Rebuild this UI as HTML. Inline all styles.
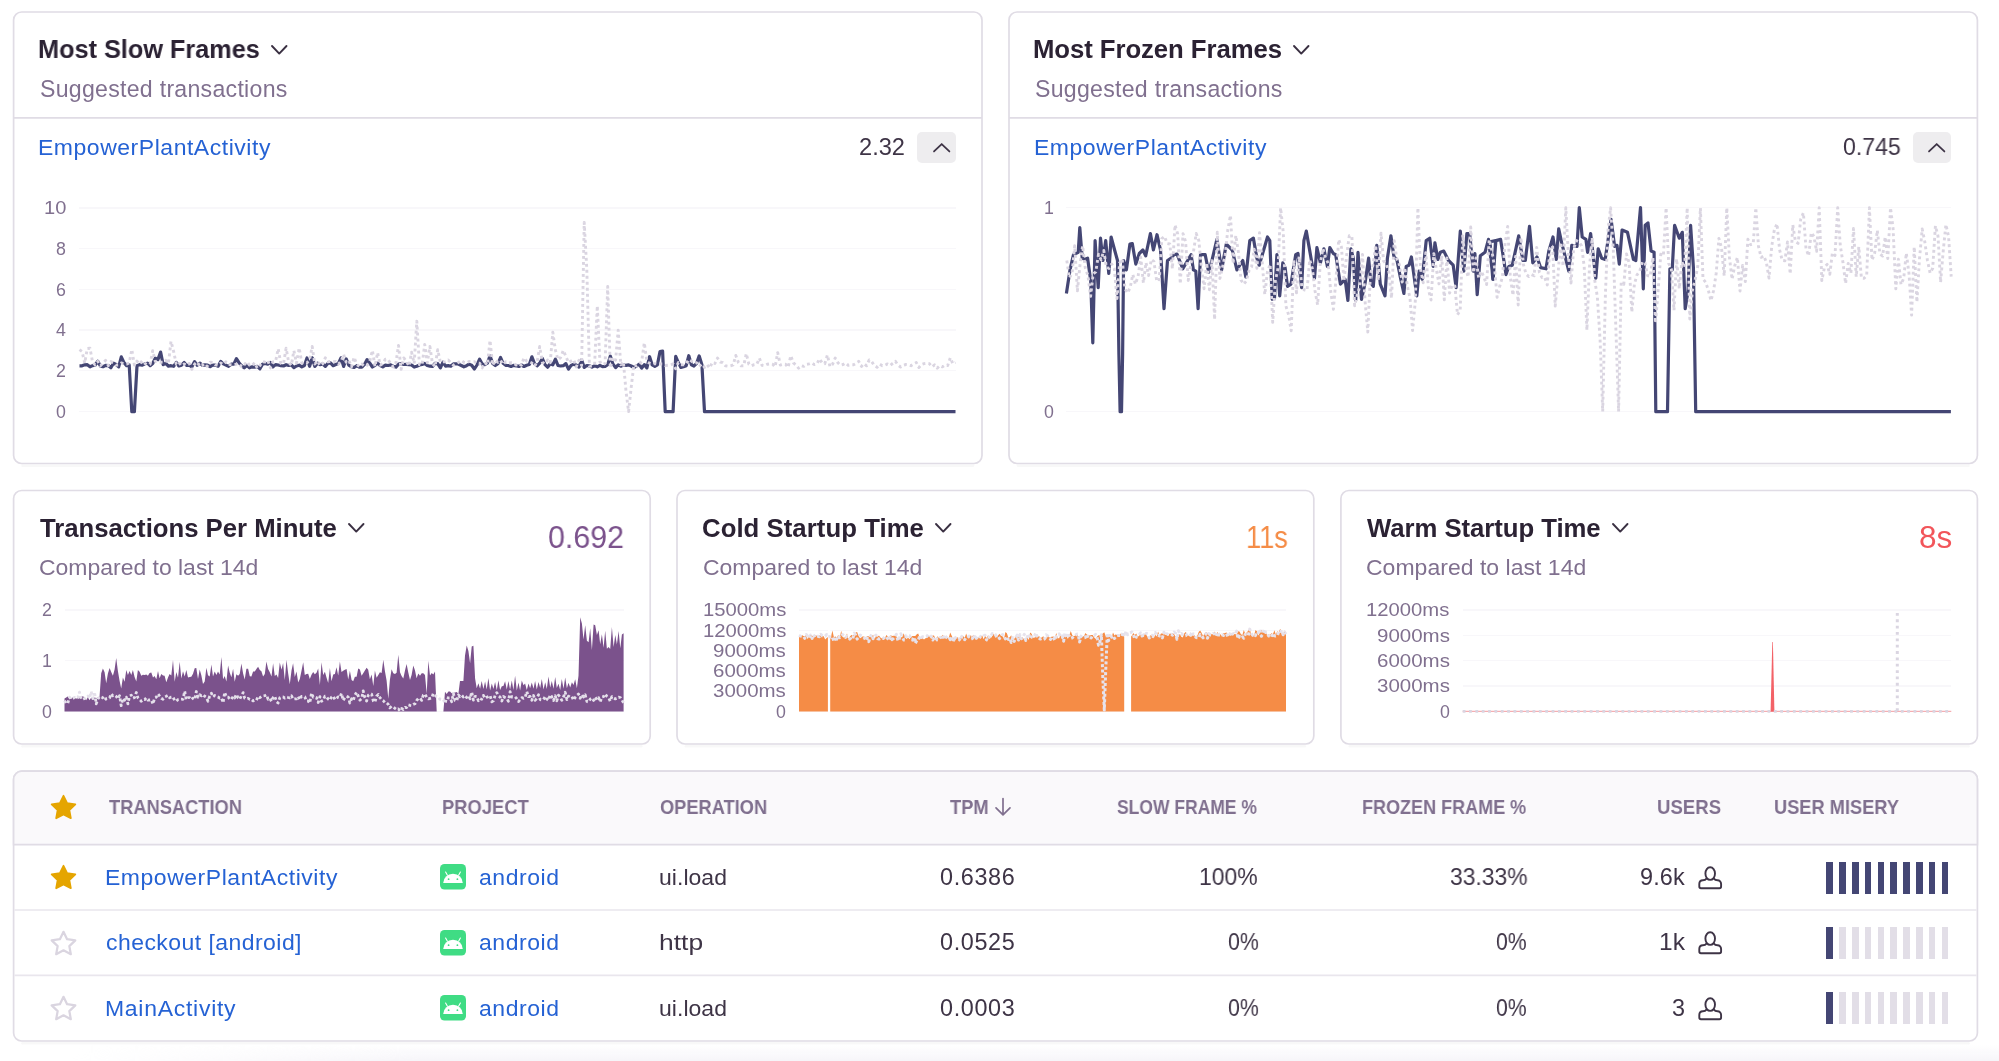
<!DOCTYPE html>
<html><head><meta charset="utf-8"><title>Performance</title>
<style>
html,body{margin:0;padding:0;background:#fff;}
body{width:1999px;height:1061px;position:relative;overflow:hidden;font-family:"Liberation Sans",sans-serif;}
.t{position:absolute;white-space:nowrap;line-height:1;will-change:transform;}
.a{position:absolute;overflow:visible;}
.g{position:absolute;height:1.3px;background:#F8F7FA;}
.btn{position:absolute;background:#EEEDEF;border-radius:5px;}
.b{position:absolute;width:6.6px;height:32px;}
.bg{position:absolute;left:0;top:1045px;width:1999px;height:16px;background:linear-gradient(to bottom,rgba(246,245,249,0),rgba(246,245,249,1));-webkit-mask-image:linear-gradient(to right,transparent 70px,#000 420px);mask-image:linear-gradient(to right,transparent 70px,#000 420px);}
</style></head><body>
<div class="bg"></div>
<svg class="a" style="left:0;top:0" width="1999" height="1061" viewBox="0 0 1999 1061">
<path d="M22.6 465.7 H973" stroke="#3E3446" stroke-opacity="0.035" stroke-width="2.6" stroke-linecap="round" fill="none"/>
<rect x="13.6" y="12" width="968.4" height="451.5" rx="8" fill="#fff" stroke="#E0DCE5" stroke-width="1.7"/>
<path d="M1018 465.7 H1968.4" stroke="#3E3446" stroke-opacity="0.035" stroke-width="2.6" stroke-linecap="round" fill="none"/>
<rect x="1009" y="12" width="968.4" height="451.5" rx="8" fill="#fff" stroke="#E0DCE5" stroke-width="1.7"/>
<path d="M22.6 746.2 H641.2" stroke="#3E3446" stroke-opacity="0.035" stroke-width="2.6" stroke-linecap="round" fill="none"/>
<rect x="13.6" y="490.5" width="636.6" height="253.5" rx="8" fill="#fff" stroke="#E0DCE5" stroke-width="1.7"/>
<path d="M686 746.2 H1304.8" stroke="#3E3446" stroke-opacity="0.035" stroke-width="2.6" stroke-linecap="round" fill="none"/>
<rect x="677" y="490.5" width="636.8" height="253.5" rx="8" fill="#fff" stroke="#E0DCE5" stroke-width="1.7"/>
<path d="M1349.9 746.2 H1968.4" stroke="#3E3446" stroke-opacity="0.035" stroke-width="2.6" stroke-linecap="round" fill="none"/>
<rect x="1340.9" y="490.5" width="636.5" height="253.5" rx="8" fill="#fff" stroke="#E0DCE5" stroke-width="1.7"/>
<path d="M22.6 1043.2 H1968.4" stroke="#3E3446" stroke-opacity="0.035" stroke-width="2.6" stroke-linecap="round" fill="none"/>
<rect x="13.6" y="771.2" width="1963.8" height="269.8" rx="8" fill="#fff" stroke="#E0DCE5" stroke-width="1.7"/>
<path d="M13.6 844.6 V779.2 A8 8 0 0 1 21.6 771.2 H1969.4 A8 8 0 0 1 1977.4 779.2 V844.6 Z" fill="#FAF9FB" stroke="#E0DCE5" stroke-width="1.7"/>
<path d="M14.4 910 H1976.6 M14.4 975.4 H1976.6" stroke="#E9E6ED" stroke-width="1.6" fill="none"/>
<path d="M13.6 117.8 H982 M1009 117.8 H1977.4" stroke="#E0DCE5" stroke-width="1.7" fill="none"/>
</svg>
<div class="t" id="t0" style="left:38px;top:35px;line-height:28px;font-size:25.73px;transform:scaleX(0.9823);transform-origin:0 0;color:#2B2233;font-weight:700;">Most Slow Frames</div>
<svg class="a" style="left:269.8px;top:43.5px" width="18.5" height="11.600000000000001" viewBox="-2 -2 18.5 11.600000000000001"><path d="M0 0 L7.25 7.600000000000001 L14.5 0" fill="none" stroke="#3A3042" stroke-width="1.9" stroke-linecap="round" stroke-linejoin="round"/></svg>
<div class="t" id="t1" style="left:40px;top:76px;line-height:26px;font-size:23.11px;letter-spacing:0.276px;color:#80708F;">Suggested transactions</div>
<div class="t" id="t2" style="left:38px;top:134px;line-height:26px;font-size:22.97px;letter-spacing:0.542px;color:#2562D4;">EmpowerPlantActivity</div>
<div class="t" id="t3" style="left:859px;top:134px;line-height:26px;font-size:23.4px;transform:scaleX(1.0098);transform-origin:0 0;color:#3E3446;">2.32</div>
<div class="btn" style="left:917.2px;top:132.3px;width:38.4px;height:30.5px"></div>
<svg class="a" style="left:931.6px;top:142px" width="19.399999999999977" height="11.5" viewBox="-2 -2 19.399999999999977 11.5"><path d="M0 7.5 L7.699999999999989 0 L15.399999999999977 7.5" fill="none" stroke="#3E3446" stroke-width="1.75" stroke-linecap="round" stroke-linejoin="round"/></svg>
<div class="t" id="t4" style="left:1033px;top:35px;line-height:28px;font-size:25.73px;letter-spacing:-0.065px;color:#2B2233;font-weight:700;">Most Frozen Frames</div>
<svg class="a" style="left:1292.0px;top:43.5px" width="18.5" height="11.600000000000001" viewBox="-2 -2 18.5 11.600000000000001"><path d="M0 0 L7.25 7.600000000000001 L14.5 0" fill="none" stroke="#3A3042" stroke-width="1.9" stroke-linecap="round" stroke-linejoin="round"/></svg>
<div class="t" id="t5" style="left:1035px;top:76px;line-height:26px;font-size:23.11px;letter-spacing:0.276px;color:#80708F;">Suggested transactions</div>
<div class="t" id="t6" style="left:1034px;top:134px;line-height:26px;font-size:22.97px;letter-spacing:0.542px;color:#2562D4;">EmpowerPlantActivity</div>
<div class="t" id="t7" style="left:1843px;top:134px;line-height:26px;font-size:23.4px;transform:scaleX(0.9872);transform-origin:0 0;color:#3E3446;">0.745</div>
<div class="btn" style="left:1912.7px;top:132.3px;width:38.4px;height:30.5px"></div>
<svg class="a" style="left:1927.1px;top:142px" width="19.40000000000009" height="11.5" viewBox="-2 -2 19.40000000000009 11.5"><path d="M0 7.5 L7.7000000000000455 0 L15.400000000000091 7.5" fill="none" stroke="#3E3446" stroke-width="1.75" stroke-linecap="round" stroke-linejoin="round"/></svg>
<div class="t" style="left:43.90px;top:198px;line-height:20px;font-size:17.8px;transform:scaleX(1.1291);transform-origin:0 0;color:#80708F">10</div>
<div class="g" style="left:79px;top:207.4px;width:876.6px"></div>
<div class="t" style="left:56.45px;top:239px;line-height:20px;font-size:17.8px;color:#80708F">8</div>
<div class="g" style="left:79px;top:248.1px;width:876.6px"></div>
<div class="t" style="left:56.45px;top:280px;line-height:20px;font-size:17.8px;color:#80708F">6</div>
<div class="g" style="left:79px;top:288.8px;width:876.6px"></div>
<div class="t" style="left:56.45px;top:320px;line-height:20px;font-size:17.8px;color:#80708F">4</div>
<div class="g" style="left:79px;top:329.4px;width:876.6px"></div>
<div class="t" style="left:56.45px;top:361px;line-height:20px;font-size:17.8px;color:#80708F">2</div>
<div class="g" style="left:79px;top:370.1px;width:876.6px"></div>
<div class="t" style="left:56.45px;top:402px;line-height:20px;font-size:17.8px;color:#80708F">0</div>
<div class="g" style="left:79px;top:410.8px;width:876.6px"></div>
<div class="t" style="left:1043.75px;top:198px;line-height:20px;font-size:17.8px;color:#80708F">1</div>
<div class="t" style="left:1043.75px;top:402px;line-height:20px;font-size:17.8px;color:#80708F">0</div>
<div class="g" style="left:1066.4px;top:207.0px;width:885.0999999999999px"></div>
<div class="g" style="left:1066.4px;top:410.8px;width:885.0999999999999px"></div>
<div class="t" id="t8" style="left:40px;top:514px;line-height:28px;font-size:25.73px;letter-spacing:-0.016px;color:#2B2233;font-weight:700;">Transactions Per Minute</div>
<svg class="a" style="left:347px;top:522.1px" width="18.5" height="11.600000000000023" viewBox="-2 -2 18.5 11.600000000000023"><path d="M0 0 L7.25 7.600000000000023 L14.5 0" fill="none" stroke="#3A3042" stroke-width="1.9" stroke-linecap="round" stroke-linejoin="round"/></svg>
<div class="t" id="t9" style="left:39px;top:554px;line-height:26px;font-size:22.97px;letter-spacing:-0.011px;color:#80708F;">Compared to last 14d</div>
<div class="t" id="t10" style="left:548px;top:519px;line-height:36px;font-size:31.54px;transform:scaleX(0.9651);transform-origin:0 0;color:#7B528C;">0.692</div>
<div class="t" id="t11" style="left:702px;top:514px;line-height:28px;font-size:25.73px;letter-spacing:0.053px;color:#2B2233;font-weight:700;">Cold Startup Time</div>
<svg class="a" style="left:933.8px;top:522.1px" width="18.5" height="11.600000000000023" viewBox="-2 -2 18.5 11.600000000000023"><path d="M0 0 L7.25 7.600000000000023 L14.5 0" fill="none" stroke="#3A3042" stroke-width="1.9" stroke-linecap="round" stroke-linejoin="round"/></svg>
<div class="t" id="t12" style="left:703px;top:554px;line-height:26px;font-size:22.97px;letter-spacing:-0.011px;color:#80708F;">Compared to last 14d</div>
<div class="t" id="t13" style="left:1246px;top:519px;line-height:36px;font-size:31.54px;transform:scaleX(0.8619);transform-origin:0 0;color:#F58C46;">11s</div>
<div class="t" id="t14" style="left:1367px;top:514px;line-height:28px;font-size:25.73px;letter-spacing:-0.047px;color:#2B2233;font-weight:700;">Warm Startup Time</div>
<svg class="a" style="left:1610.8px;top:522.1px" width="18.5" height="11.600000000000023" viewBox="-2 -2 18.5 11.600000000000023"><path d="M0 0 L7.25 7.600000000000023 L14.5 0" fill="none" stroke="#3A3042" stroke-width="1.9" stroke-linecap="round" stroke-linejoin="round"/></svg>
<div class="t" id="t15" style="left:1366px;top:554px;line-height:26px;font-size:22.97px;letter-spacing:0.032px;color:#80708F;">Compared to last 14d</div>
<div class="t" id="t16" style="left:1919px;top:519px;line-height:36px;font-size:31.54px;transform:scaleX(0.9925);transform-origin:0 0;color:#F2555A;">8s</div>
<div class="t" style="left:41.55px;top:600px;line-height:20px;font-size:17.8px;color:#80708F">2</div>
<div class="t" style="left:41.55px;top:651px;line-height:20px;font-size:17.8px;color:#80708F">1</div>
<div class="t" style="left:41.55px;top:702px;line-height:20px;font-size:17.8px;color:#80708F">0</div>
<div class="g" style="left:64.5px;top:609.4px;width:559.1px"></div>
<div class="g" style="left:64.5px;top:660.0px;width:559.1px"></div>
<div class="g" style="left:64.5px;top:710.6px;width:559.1px"></div>
<div class="t" style="left:702.50px;top:600px;line-height:20px;font-size:17.8px;transform:scaleX(1.1397);transform-origin:0 0;color:#80708F">15000ms</div>
<div class="g" style="left:799px;top:609.4px;width:487px"></div>
<div class="t" style="left:702.50px;top:621px;line-height:20px;font-size:17.8px;transform:scaleX(1.1397);transform-origin:0 0;color:#80708F">12000ms</div>
<div class="g" style="left:799px;top:629.6px;width:487px"></div>
<div class="t" style="left:712.90px;top:641px;line-height:20px;font-size:17.8px;transform:scaleX(1.1510);transform-origin:0 0;color:#80708F">9000ms</div>
<div class="g" style="left:799px;top:649.9px;width:487px"></div>
<div class="t" style="left:712.90px;top:661px;line-height:20px;font-size:17.8px;transform:scaleX(1.1510);transform-origin:0 0;color:#80708F">6000ms</div>
<div class="g" style="left:799px;top:670.1px;width:487px"></div>
<div class="t" style="left:712.90px;top:681px;line-height:20px;font-size:17.8px;transform:scaleX(1.1510);transform-origin:0 0;color:#80708F">3000ms</div>
<div class="g" style="left:799px;top:690.4px;width:487px"></div>
<div class="t" style="left:775.95px;top:702px;line-height:20px;font-size:17.8px;color:#80708F">0</div>
<div class="g" style="left:799px;top:710.6px;width:487px"></div>
<div class="t" style="left:1366.40px;top:600px;line-height:20px;font-size:17.8px;transform:scaleX(1.1384);transform-origin:0 0;color:#80708F">12000ms</div>
<div class="g" style="left:1462.7px;top:609.4px;width:488.79999999999995px"></div>
<div class="t" style="left:1376.60px;top:626px;line-height:20px;font-size:17.8px;transform:scaleX(1.1526);transform-origin:0 0;color:#80708F">9000ms</div>
<div class="g" style="left:1462.7px;top:634.7px;width:488.79999999999995px"></div>
<div class="t" style="left:1376.60px;top:651px;line-height:20px;font-size:17.8px;transform:scaleX(1.1526);transform-origin:0 0;color:#80708F">6000ms</div>
<div class="g" style="left:1462.7px;top:660.0px;width:488.79999999999995px"></div>
<div class="t" style="left:1376.60px;top:676px;line-height:20px;font-size:17.8px;transform:scaleX(1.1526);transform-origin:0 0;color:#80708F">3000ms</div>
<div class="g" style="left:1462.7px;top:685.3px;width:488.79999999999995px"></div>
<div class="t" style="left:1439.75px;top:702px;line-height:20px;font-size:17.8px;color:#80708F">0</div>
<div class="g" style="left:1462.7px;top:710.6px;width:488.79999999999995px"></div>
<div class="t" id="t17" style="left:109px;top:796px;line-height:22px;font-size:20.06px;transform:scaleX(0.9113);transform-origin:0 0;color:#80708F;font-weight:700;">TRANSACTION</div>
<div class="t" id="t18" style="left:442px;top:796px;line-height:22px;font-size:20.06px;transform:scaleX(0.9164);transform-origin:0 0;color:#80708F;font-weight:700;">PROJECT</div>
<div class="t" id="t19" style="left:660px;top:796px;line-height:22px;font-size:20.06px;transform:scaleX(0.9106);transform-origin:0 0;color:#80708F;font-weight:700;">OPERATION</div>
<div class="t" id="t20" style="left:950px;top:796px;line-height:22px;font-size:20.06px;transform:scaleX(0.9136);transform-origin:0 0;color:#80708F;font-weight:700;">TPM</div>
<div class="t" id="t21" style="left:1117px;top:796px;line-height:22px;font-size:20.06px;transform:scaleX(0.8725);transform-origin:0 0;color:#80708F;font-weight:700;">SLOW FRAME %</div>
<div class="t" id="t22" style="left:1362px;top:796px;line-height:22px;font-size:20.06px;transform:scaleX(0.8988);transform-origin:0 0;color:#80708F;font-weight:700;">FROZEN FRAME %</div>
<div class="t" id="t23" style="left:1657px;top:796px;line-height:22px;font-size:20.06px;transform:scaleX(0.9275);transform-origin:0 0;color:#80708F;font-weight:700;">USERS</div>
<div class="t" id="t24" style="left:1774px;top:796px;line-height:22px;font-size:20.06px;transform:scaleX(0.9095);transform-origin:0 0;color:#80708F;font-weight:700;">USER MISERY</div>
<svg class="a" style="left:992.6px;top:795.8px" width="20" height="22" viewBox="0 0 20 22"><path d="M10 2.5 V18.5 M3 11.8 L10 18.8 L17 11.8" fill="none" stroke="#80708F" stroke-width="1.7" stroke-linecap="round" stroke-linejoin="round"/></svg>
<svg class="a" style="left:50.3px;top:793.9px" width="27" height="27" viewBox="0 0 24 24"><path d="M12 1.6 L15.2 8.2 L22.5 9.2 L17.2 14.3 L18.5 21.5 L12 18.1 L5.5 21.5 L6.8 14.3 L1.5 9.2 L8.8 8.2 Z" fill="#E5A500" stroke="#E5A500" stroke-width="1.6" stroke-linejoin="round"/></svg>
<svg class="a" style="left:50.3px;top:864.4px" width="27" height="27" viewBox="0 0 24 24"><path d="M12 1.6 L15.2 8.2 L22.5 9.2 L17.2 14.3 L18.5 21.5 L12 18.1 L5.5 21.5 L6.8 14.3 L1.5 9.2 L8.8 8.2 Z" fill="#E5A500" stroke="#E5A500" stroke-width="1.6" stroke-linejoin="round"/></svg>
<div class="t" id="t25" style="left:105px;top:864px;line-height:26px;font-size:22.97px;letter-spacing:0.542px;color:#2562D4;">EmpowerPlantActivity</div>
<svg class="a" style="left:440px;top:864.4px" width="26" height="25.6" viewBox="0 0 26 25.6"><rect width="26" height="25.6" rx="4.5" fill="#3FDC84"/><path d="M3.2 19 A9.8 9.2 0 0 1 22.8 19 Z" fill="#fff"/><path d="M7.4 11.2 L5.6 8 M18.6 11.2 L20.4 8" stroke="#fff" stroke-width="1.1" stroke-linecap="round"/><circle cx="8.6" cy="15.2" r="0.9" fill="#3FDC84"/><circle cx="17.4" cy="15.2" r="0.9" fill="#3FDC84"/></svg>
<div class="t" id="t26" style="left:479px;top:864px;line-height:26px;font-size:22.97px;letter-spacing:0.575px;color:#2562D4;">android</div>
<div class="t" id="t27" style="left:659px;top:864px;line-height:26px;font-size:22.97px;letter-spacing:0.042px;color:#3E3446;">ui.load</div>
<div class="t" id="t28" style="left:940px;top:864px;line-height:26px;font-size:23.4px;letter-spacing:0.640px;color:#3E3446;">0.6386</div>
<div class="t" id="t29" style="left:1199px;top:864px;line-height:26px;font-size:23.4px;transform:scaleX(0.9800);transform-origin:0 0;color:#3E3446;">100%</div>
<div class="t" id="t30" style="left:1450px;top:864px;line-height:26px;font-size:23.4px;transform:scaleX(0.9781);transform-origin:0 0;color:#3E3446;">33.33%</div>
<div class="t" id="t31" style="left:1640px;top:864px;line-height:26px;font-size:23.4px;letter-spacing:0.150px;color:#3E3446;">9.6k</div>
<svg class="a" style="left:1697px;top:864.7px" width="27" height="26" viewBox="0 0 27 26"><g fill="none" stroke="#3E3446" stroke-width="1.9" stroke-linejoin="round" stroke-linecap="round"><ellipse cx="13.2" cy="8.6" rx="4.8" ry="6.3"/><path d="M9.5 13.6 C8.6 14.8 7.2 15.2 5.9 15.2 C3.7 15.2 2.3 16.9 2.3 19 V21.6 Q2.3 23.3 4 23.3 H22.4 Q24.1 23.3 24.1 21.6 V19 C24.1 16.9 22.7 15.2 20.5 15.2 C19.2 15.2 17.8 14.8 16.9 13.6"/></g></svg>
<div class="b" style="left:1826.40px;top:861.6px;background:#444674"></div>
<div class="b" style="left:1839.20px;top:861.6px;background:#444674"></div>
<div class="b" style="left:1852.00px;top:861.6px;background:#444674"></div>
<div class="b" style="left:1864.80px;top:861.6px;background:#444674"></div>
<div class="b" style="left:1877.60px;top:861.6px;background:#444674"></div>
<div class="b" style="left:1890.40px;top:861.6px;background:#444674"></div>
<div class="b" style="left:1903.20px;top:861.6px;background:#444674"></div>
<div class="b" style="left:1916.00px;top:861.6px;background:#444674"></div>
<div class="b" style="left:1928.80px;top:861.6px;background:#444674"></div>
<div class="b" style="left:1941.60px;top:861.6px;background:#444674"></div>
<svg class="a" style="left:50.3px;top:929.8000000000001px" width="27" height="27" viewBox="0 0 24 24"><path d="M12 1.6 L15.2 8.2 L22.5 9.2 L17.2 14.3 L18.5 21.5 L12 18.1 L5.5 21.5 L6.8 14.3 L1.5 9.2 L8.8 8.2 Z" fill="none" stroke="#DAD5E0" stroke-width="2" stroke-linejoin="round"/></svg>
<div class="t" id="t32" style="left:106px;top:929px;line-height:26px;font-size:22.97px;letter-spacing:0.459px;color:#2562D4;">checkout [android]</div>
<svg class="a" style="left:440px;top:929.8px" width="26" height="25.6" viewBox="0 0 26 25.6"><rect width="26" height="25.6" rx="4.5" fill="#3FDC84"/><path d="M3.2 19 A9.8 9.2 0 0 1 22.8 19 Z" fill="#fff"/><path d="M7.4 11.2 L5.6 8 M18.6 11.2 L20.4 8" stroke="#fff" stroke-width="1.1" stroke-linecap="round"/><circle cx="8.6" cy="15.2" r="0.9" fill="#3FDC84"/><circle cx="17.4" cy="15.2" r="0.9" fill="#3FDC84"/></svg>
<div class="t" id="t33" style="left:479px;top:929px;line-height:26px;font-size:22.97px;letter-spacing:0.575px;color:#2562D4;">android</div>
<div class="t" id="t34" style="left:659px;top:929px;line-height:26px;font-size:22.97px;transform:scaleX(1.1503);transform-origin:0 0;color:#3E3446;">http</div>
<div class="t" id="t35" style="left:940px;top:929px;line-height:26px;font-size:23.4px;letter-spacing:0.640px;color:#3E3446;">0.0525</div>
<div class="t" id="t36" style="left:1228px;top:929px;line-height:26px;font-size:23.4px;transform:scaleX(0.9118);transform-origin:0 0;color:#3E3446;">0%</div>
<div class="t" id="t37" style="left:1496px;top:929px;line-height:26px;font-size:23.4px;transform:scaleX(0.9059);transform-origin:0 0;color:#3E3446;">0%</div>
<div class="t" id="t38" style="left:1659px;top:929px;line-height:26px;font-size:23.4px;transform:scaleX(1.0480);transform-origin:0 0;color:#3E3446;">1k</div>
<svg class="a" style="left:1697px;top:930.1px" width="27" height="26" viewBox="0 0 27 26"><g fill="none" stroke="#3E3446" stroke-width="1.9" stroke-linejoin="round" stroke-linecap="round"><ellipse cx="13.2" cy="8.6" rx="4.8" ry="6.3"/><path d="M9.5 13.6 C8.6 14.8 7.2 15.2 5.9 15.2 C3.7 15.2 2.3 16.9 2.3 19 V21.6 Q2.3 23.3 4 23.3 H22.4 Q24.1 23.3 24.1 21.6 V19 C24.1 16.9 22.7 15.2 20.5 15.2 C19.2 15.2 17.8 14.8 16.9 13.6"/></g></svg>
<div class="b" style="left:1826.40px;top:927.0px;background:#444674"></div>
<div class="b" style="left:1839.20px;top:927.0px;background:#E2DEE7"></div>
<div class="b" style="left:1852.00px;top:927.0px;background:#E2DEE7"></div>
<div class="b" style="left:1864.80px;top:927.0px;background:#E2DEE7"></div>
<div class="b" style="left:1877.60px;top:927.0px;background:#E2DEE7"></div>
<div class="b" style="left:1890.40px;top:927.0px;background:#E2DEE7"></div>
<div class="b" style="left:1903.20px;top:927.0px;background:#E2DEE7"></div>
<div class="b" style="left:1916.00px;top:927.0px;background:#E2DEE7"></div>
<div class="b" style="left:1928.80px;top:927.0px;background:#E2DEE7"></div>
<div class="b" style="left:1941.60px;top:927.0px;background:#E2DEE7"></div>
<svg class="a" style="left:50.3px;top:995.2px" width="27" height="27" viewBox="0 0 24 24"><path d="M12 1.6 L15.2 8.2 L22.5 9.2 L17.2 14.3 L18.5 21.5 L12 18.1 L5.5 21.5 L6.8 14.3 L1.5 9.2 L8.8 8.2 Z" fill="none" stroke="#DAD5E0" stroke-width="2" stroke-linejoin="round"/></svg>
<div class="t" id="t39" style="left:105px;top:995px;line-height:26px;font-size:22.97px;letter-spacing:0.732px;color:#2562D4;">MainActivity</div>
<svg class="a" style="left:440px;top:995.2px" width="26" height="25.6" viewBox="0 0 26 25.6"><rect width="26" height="25.6" rx="4.5" fill="#3FDC84"/><path d="M3.2 19 A9.8 9.2 0 0 1 22.8 19 Z" fill="#fff"/><path d="M7.4 11.2 L5.6 8 M18.6 11.2 L20.4 8" stroke="#fff" stroke-width="1.1" stroke-linecap="round"/><circle cx="8.6" cy="15.2" r="0.9" fill="#3FDC84"/><circle cx="17.4" cy="15.2" r="0.9" fill="#3FDC84"/></svg>
<div class="t" id="t40" style="left:479px;top:995px;line-height:26px;font-size:22.97px;letter-spacing:0.575px;color:#2562D4;">android</div>
<div class="t" id="t41" style="left:659px;top:995px;line-height:26px;font-size:22.97px;letter-spacing:0.042px;color:#3E3446;">ui.load</div>
<div class="t" id="t42" style="left:940px;top:995px;line-height:26px;font-size:23.4px;letter-spacing:0.640px;color:#3E3446;">0.0003</div>
<div class="t" id="t43" style="left:1228px;top:995px;line-height:26px;font-size:23.4px;transform:scaleX(0.9118);transform-origin:0 0;color:#3E3446;">0%</div>
<div class="t" id="t44" style="left:1496px;top:995px;line-height:26px;font-size:23.4px;transform:scaleX(0.9059);transform-origin:0 0;color:#3E3446;">0%</div>
<div class="t" id="t45" style="left:1672px;top:995px;line-height:26px;font-size:23.4px;letter-spacing:0.000px;color:#3E3446;">3</div>
<svg class="a" style="left:1697px;top:995.5px" width="27" height="26" viewBox="0 0 27 26"><g fill="none" stroke="#3E3446" stroke-width="1.9" stroke-linejoin="round" stroke-linecap="round"><ellipse cx="13.2" cy="8.6" rx="4.8" ry="6.3"/><path d="M9.5 13.6 C8.6 14.8 7.2 15.2 5.9 15.2 C3.7 15.2 2.3 16.9 2.3 19 V21.6 Q2.3 23.3 4 23.3 H22.4 Q24.1 23.3 24.1 21.6 V19 C24.1 16.9 22.7 15.2 20.5 15.2 C19.2 15.2 17.8 14.8 16.9 13.6"/></g></svg>
<div class="b" style="left:1826.40px;top:992.4px;background:#444674"></div>
<div class="b" style="left:1839.20px;top:992.4px;background:#E2DEE7"></div>
<div class="b" style="left:1852.00px;top:992.4px;background:#E2DEE7"></div>
<div class="b" style="left:1864.80px;top:992.4px;background:#E2DEE7"></div>
<div class="b" style="left:1877.60px;top:992.4px;background:#E2DEE7"></div>
<div class="b" style="left:1890.40px;top:992.4px;background:#E2DEE7"></div>
<div class="b" style="left:1903.20px;top:992.4px;background:#E2DEE7"></div>
<div class="b" style="left:1916.00px;top:992.4px;background:#E2DEE7"></div>
<div class="b" style="left:1928.80px;top:992.4px;background:#E2DEE7"></div>
<div class="b" style="left:1941.60px;top:992.4px;background:#E2DEE7"></div>
<svg class="a" style="left:0;top:0" width="1999" height="1061" viewBox="0 0 1999 1061">
<path d="M79.5 365.8 L82.1 365.8 L84.7 364.8 L87.3 364.7 L90.0 366.8 L92.6 365.6 L95.2 365.0 L97.8 361.2 L100.4 366.1 L103.0 366.7 L105.6 365.4 L108.3 365.6 L110.9 367.7 L113.5 363.2 L116.1 364.5 L118.7 366.9 L121.3 356.9 L124.0 362.6 L126.6 365.6 L129.2 365.0 L131.8 411.6 L134.4 411.6 L137.0 365.7 L139.6 364.6 L142.3 365.2 L144.9 363.8 L147.5 363.2 L150.1 365.7 L152.7 363.5 L155.3 358.1 L157.9 359.6 L160.6 352.1 L163.2 364.7 L165.8 363.3 L168.4 366.1 L171.0 365.7 L173.6 366.3 L176.3 362.4 L178.9 366.0 L181.5 365.2 L184.1 362.5 L186.7 365.5 L189.3 365.1 L191.9 366.8 L194.6 361.6 L197.2 365.3 L199.8 363.1 L202.4 365.2 L205.0 364.9 L207.6 365.1 L210.2 366.7 L212.9 365.0 L215.5 365.1 L218.1 366.2 L220.7 361.4 L223.3 363.9 L225.9 365.1 L228.6 366.4 L231.2 364.2 L233.8 364.1 L236.4 358.6 L239.0 362.7 L241.6 365.7 L244.2 367.9 L246.9 365.4 L249.5 367.8 L252.1 366.8 L254.7 367.2 L257.3 366.4 L259.9 368.8 L262.5 364.2 L265.2 363.4 L267.8 364.1 L270.4 362.5 L273.0 366.8 L275.6 364.6 L278.2 365.0 L280.8 365.7 L283.5 366.0 L286.1 364.7 L288.7 365.5 L291.3 364.9 L293.9 367.6 L296.5 366.0 L299.2 365.2 L301.8 366.8 L304.4 365.5 L307.0 358.0 L309.6 366.3 L312.2 357.7 L314.8 366.4 L317.5 363.2 L320.1 364.7 L322.7 364.0 L325.3 366.4 L327.9 363.2 L330.5 362.9 L333.1 365.7 L335.8 364.5 L338.4 363.5 L341.0 357.8 L343.6 366.4 L346.2 358.9 L348.8 365.2 L351.5 366.8 L354.1 367.5 L356.7 365.7 L359.3 367.2 L361.9 367.2 L364.5 364.5 L367.1 359.6 L369.8 363.1 L372.4 367.0 L375.0 365.4 L377.6 363.1 L380.2 365.6 L382.8 366.9 L385.4 365.2 L388.1 365.5 L390.7 364.9 L393.3 366.2 L395.9 367.1 L398.5 364.1 L401.1 363.7 L403.8 364.5 L406.4 364.3 L409.0 364.7 L411.6 365.0 L414.2 367.1 L416.8 366.2 L419.4 365.0 L422.1 364.4 L424.7 363.4 L427.3 365.5 L429.9 366.2 L432.5 366.4 L435.1 363.3 L437.7 363.6 L440.4 367.9 L443.0 362.1 L445.6 366.1 L448.2 365.6 L450.8 366.2 L453.4 363.9 L456.0 363.8 L458.7 364.3 L461.3 365.5 L463.9 366.8 L466.5 365.7 L469.1 364.2 L471.7 365.2 L474.4 369.0 L477.0 365.0 L479.6 359.2 L482.2 364.1 L484.8 364.7 L487.4 363.2 L490.0 355.8 L492.7 363.5 L495.3 365.5 L497.9 363.7 L500.5 357.5 L503.1 363.3 L505.7 365.3 L508.3 365.5 L511.0 366.5 L513.6 365.4 L516.2 365.8 L518.8 366.5 L521.4 365.0 L524.0 366.5 L526.7 365.2 L529.3 364.5 L531.9 356.8 L534.5 363.6 L537.1 365.9 L539.7 363.2 L542.3 358.5 L545.0 364.7 L547.6 367.2 L550.2 363.8 L552.8 364.9 L555.4 359.1 L558.0 365.5 L560.6 366.0 L563.3 365.7 L565.9 363.6 L568.5 369.2 L571.1 365.4 L573.7 364.3 L576.3 365.1 L579.0 367.1 L581.6 360.0 L584.2 367.4 L586.8 365.5 L589.4 365.8 L592.0 367.1 L594.6 365.8 L597.3 366.8 L599.9 365.4 L602.5 366.6 L605.1 366.5 L607.7 364.7 L610.3 356.1 L612.9 363.9 L615.6 367.6 L618.2 364.8 L620.8 366.2 L623.4 365.1 L626.0 365.4 L628.6 364.9 L631.2 366.0 L633.9 367.5 L636.5 366.0 L639.1 364.2 L641.7 368.1 L644.3 364.6 L646.9 367.9 L649.6 356.7 L652.2 364.9 L654.8 366.3 L657.4 364.8 L660.0 351.6 L662.6 351.1 L665.2 411.6 L667.9 411.6 L670.5 411.6 L673.1 411.6 L675.7 356.3 L678.3 362.6 L680.9 367.5 L683.5 366.8 L686.2 365.7 L688.8 355.7 L691.4 364.7 L694.0 366.0 L696.6 363.3 L699.2 355.9 L701.9 364.6 L704.5 411.6 L707.1 411.6 L709.7 411.6 L712.3 411.6 L714.9 411.6 L717.5 411.6 L720.2 411.6 L722.8 411.6 L725.4 411.6 L728.0 411.6 L730.6 411.6 L733.2 411.6 L735.8 411.6 L738.5 411.6 L741.1 411.6 L743.7 411.6 L746.3 411.6 L748.9 411.6 L751.5 411.6 L754.2 411.6 L756.8 411.6 L759.4 411.6 L762.0 411.6 L764.6 411.6 L767.2 411.6 L769.8 411.6 L772.5 411.6 L775.1 411.6 L777.7 411.6 L780.3 411.6 L782.9 411.6 L785.5 411.6 L788.1 411.6 L790.8 411.6 L793.4 411.6 L796.0 411.6 L798.6 411.6 L801.2 411.6 L803.8 411.6 L806.4 411.6 L809.1 411.6 L811.7 411.6 L814.3 411.6 L816.9 411.6 L819.5 411.6 L822.1 411.6 L824.8 411.6 L827.4 411.6 L830.0 411.6 L832.6 411.6 L835.2 411.6 L837.8 411.6 L840.4 411.6 L843.1 411.6 L845.7 411.6 L848.3 411.6 L850.9 411.6 L853.5 411.6 L856.1 411.6 L858.7 411.6 L861.4 411.6 L864.0 411.6 L866.6 411.6 L869.2 411.6 L871.8 411.6 L874.4 411.6 L877.1 411.6 L879.7 411.6 L882.3 411.6 L884.9 411.6 L887.5 411.6 L890.1 411.6 L892.7 411.6 L895.4 411.6 L898.0 411.6 L900.6 411.6 L903.2 411.6 L905.8 411.6 L908.4 411.6 L911.0 411.6 L913.7 411.6 L916.3 411.6 L918.9 411.6 L921.5 411.6 L924.1 411.6 L926.7 411.6 L929.4 411.6 L932.0 411.6 L934.6 411.6 L937.2 411.6 L939.8 411.6 L942.4 411.6 L945.0 411.6 L947.7 411.6 L950.3 411.6 L952.9 411.6 L955.5 411.6" fill="none" stroke="#444674" stroke-width="3.2" stroke-linejoin="round" stroke-linecap="butt"/>
<path d="M79.5 349.7 L82.1 351.6 L84.7 363.1 L87.3 348.5 L90.0 348.2 L92.6 362.3 L95.2 365.0 L97.8 361.4 L100.4 365.9 L103.0 363.0 L105.6 360.4 L108.3 365.6 L110.9 361.6 L113.5 362.7 L116.1 365.1 L118.7 364.9 L121.3 363.0 L124.0 363.8 L126.6 364.1 L129.2 363.0 L131.8 349.6 L134.4 365.1 L137.0 361.1 L139.6 364.0 L142.3 360.8 L144.9 363.5 L147.5 364.7 L150.1 364.3 L152.7 350.6 L155.3 361.5 L157.9 361.7 L160.6 362.2 L163.2 362.1 L165.8 360.3 L168.4 363.5 L171.0 341.3 L173.6 351.3 L176.3 364.3 L178.9 362.5 L181.5 365.7 L184.1 364.0 L186.7 365.3 L189.3 363.5 L191.9 369.3 L194.6 364.1 L197.2 362.0 L199.8 366.3 L202.4 364.6 L205.0 367.6 L207.6 365.7 L210.2 362.1 L212.9 362.5 L215.5 364.9 L218.1 365.5 L220.7 363.0 L223.3 364.7 L225.9 361.8 L228.6 364.6 L231.2 364.8 L233.8 365.0 L236.4 364.2 L239.0 363.5 L241.6 366.7 L244.2 365.1 L246.9 361.6 L249.5 365.2 L252.1 365.5 L254.7 362.7 L257.3 368.3 L259.9 365.7 L262.5 361.8 L265.2 362.0 L267.8 360.4 L270.4 367.9 L273.0 361.9 L275.6 361.4 L278.2 348.7 L280.8 363.4 L283.5 363.7 L286.1 348.2 L288.7 362.3 L291.3 365.3 L293.9 350.7 L296.5 363.2 L299.2 347.9 L301.8 363.0 L304.4 362.3 L307.0 362.7 L309.6 359.7 L312.2 346.5 L314.8 364.1 L317.5 360.8 L320.1 365.7 L322.7 363.8 L325.3 357.8 L327.9 361.9 L330.5 361.2 L333.1 361.8 L335.8 361.4 L338.4 364.1 L341.0 361.5 L343.6 354.3 L346.2 362.3 L348.8 360.4 L351.5 366.8 L354.1 357.3 L356.7 364.2 L359.3 366.4 L361.9 364.0 L364.5 366.5 L367.1 365.3 L369.8 360.8 L372.4 350.4 L375.0 366.5 L377.6 352.6 L380.2 365.2 L382.8 363.5 L385.4 359.1 L388.1 359.6 L390.7 363.5 L393.3 367.0 L395.9 363.0 L398.5 345.5 L401.1 369.4 L403.8 357.9 L406.4 361.3 L409.0 366.2 L411.6 352.3 L414.2 363.5 L416.8 321.1 L419.4 364.6 L422.1 364.8 L424.7 344.5 L427.3 362.8 L429.9 346.5 L432.5 363.7 L435.1 366.6 L437.7 349.7 L440.4 362.4 L443.0 361.9 L445.6 361.9 L448.2 360.0 L450.8 362.7 L453.4 365.2 L456.0 363.7 L458.7 362.4 L461.3 360.4 L463.9 362.3 L466.5 362.9 L469.1 361.5 L471.7 361.7 L474.4 361.6 L477.0 363.5 L479.6 363.1 L482.2 367.9 L484.8 362.7 L487.4 365.0 L490.0 340.4 L492.7 365.3 L495.3 360.1 L497.9 362.3 L500.5 360.3 L503.1 364.5 L505.7 361.8 L508.3 363.1 L511.0 362.7 L513.6 363.0 L516.2 365.1 L518.8 363.6 L521.4 365.2 L524.0 357.8 L526.7 361.1 L529.3 361.7 L531.9 363.0 L534.5 366.2 L537.1 362.2 L539.7 346.5 L542.3 362.3 L545.0 363.9 L547.6 360.0 L550.2 362.8 L552.8 332.3 L555.4 350.1 L558.0 359.6 L560.6 357.5 L563.3 350.4 L565.9 356.4 L568.5 362.6 L571.1 361.0 L573.7 359.6 L576.3 366.9 L579.0 360.3 L581.6 365.4 L584.2 222.4 L586.8 269.2 L589.4 366.2 L592.0 366.1 L594.6 364.7 L597.3 305.8 L599.9 361.8 L602.5 364.6 L605.1 363.7 L607.7 286.5 L610.3 368.2 L612.9 357.5 L615.6 360.1 L618.2 330.2 L620.8 364.8 L623.4 361.8 L626.0 391.3 L628.6 411.6 L631.2 387.2 L633.9 364.7 L636.5 366.0 L639.1 364.2 L641.7 361.2 L644.3 342.8 L646.9 361.5 L649.6 363.2 L652.2 364.2 L654.8 363.6 L657.4 364.1 L660.0 363.9 L662.6 364.0 L665.2 365.5 L667.9 365.3 L670.5 365.0 L673.1 363.9 L675.7 368.7 L678.3 362.5 L680.9 364.7 L683.5 364.9 L686.2 363.4 L688.8 359.5 L691.4 361.1 L694.0 363.1 L696.6 362.7 L699.2 366.5 L701.9 364.0 L704.5 367.4 L707.1 364.6 L709.7 368.0 L712.3 362.3 L714.9 363.5 L717.5 358.0 L720.2 362.0 L722.8 362.6 L725.4 365.8 L728.0 366.2 L730.6 365.9 L733.2 364.9 L735.8 355.4 L738.5 362.8 L741.1 365.9 L743.7 365.8 L746.3 353.6 L748.9 364.3 L751.5 365.8 L754.2 364.7 L756.8 364.3 L759.4 358.2 L762.0 365.3 L764.6 365.7 L767.2 364.3 L769.8 363.9 L772.5 364.1 L775.1 366.8 L777.7 352.6 L780.3 365.0 L782.9 364.3 L785.5 364.2 L788.1 367.4 L790.8 355.7 L793.4 362.8 L796.0 365.0 L798.6 368.2 L801.2 365.7 L803.8 366.4 L806.4 364.3 L809.1 363.9 L811.7 362.9 L814.3 364.6 L816.9 364.2 L819.5 358.8 L822.1 362.8 L824.8 363.7 L827.4 355.0 L830.0 366.7 L832.6 364.2 L835.2 358.0 L837.8 362.6 L840.4 365.2 L843.1 364.5 L845.7 363.0 L848.3 365.3 L850.9 364.8 L853.5 364.8 L856.1 363.3 L858.7 361.4 L861.4 366.4 L864.0 363.6 L866.6 365.8 L869.2 359.9 L871.8 361.8 L874.4 365.5 L877.1 367.2 L879.7 364.1 L882.3 365.7 L884.9 365.2 L887.5 363.9 L890.1 365.5 L892.7 363.3 L895.4 361.2 L898.0 365.0 L900.6 367.0 L903.2 365.3 L905.8 364.5 L908.4 364.8 L911.0 365.7 L913.7 364.0 L916.3 362.6 L918.9 367.5 L921.5 364.5 L924.1 363.6 L926.7 363.3 L929.4 363.7 L932.0 366.9 L934.6 364.9 L937.2 368.1 L939.8 365.6 L942.4 366.9 L945.0 365.1 L947.7 365.5 L950.3 357.8 L952.9 363.8 L955.5 362.5" fill="none" stroke="#DAD5E1" stroke-width="2.9" stroke-dasharray="2.9 3.1" stroke-linejoin="round"/>
<path d="M1066.4 293.5 L1070.0 269.9 L1073.5 254.7 L1078.2 252.3 L1079.8 227.6 L1082.2 258.2 L1084.5 259.4 L1087.6 258.2 L1090.7 280.5 L1092.8 342.8 L1095.1 240.6 L1098.2 287.6 L1100.5 238.2 L1102.9 260.5 L1105.7 240.6 L1108.8 273.5 L1111.1 237.0 L1114.6 250.0 L1117.5 260.5 L1118.9 354.6 L1120.1 411.7 L1121.5 411.7 L1122.6 354.6 L1123.6 260.5 L1126.4 269.9 L1129.9 244.1 L1132.3 243.6 L1135.8 264.1 L1139.3 253.5 L1142.9 250.0 L1145.7 255.8 L1150.4 233.5 L1153.4 250.0 L1157.0 234.7 L1160.5 250.0 L1164.0 308.7 L1167.5 260.5 L1171.1 258.2 L1173.9 254.7 L1177.0 254.0 L1182.8 268.8 L1191.1 254.7 L1193.4 269.9 L1195.8 271.1 L1198.1 308.7 L1200.5 254.7 L1205.2 254.7 L1208.7 272.3 L1212.2 259.4 L1216.9 239.4 L1221.6 269.9 L1226.3 244.1 L1232.2 250.0 L1236.9 269.9 L1242.8 260.5 L1245.8 277.0 L1249.8 240.6 L1253.4 238.2 L1256.9 258.2 L1259.2 265.2 L1267.5 237.0 L1269.8 240.6 L1272.2 299.3 L1274.5 298.2 L1276.9 254.7 L1279.7 295.8 L1282.8 262.9 L1285.1 267.6 L1287.5 286.4 L1291.0 284.1 L1295.7 254.7 L1298.0 253.5 L1301.6 287.6 L1303.9 240.6 L1306.3 231.1 L1309.8 251.1 L1314.5 278.2 L1316.9 247.6 L1320.4 262.9 L1323.9 248.8 L1327.4 266.4 L1329.8 247.6 L1333.3 253.5 L1335.7 254.7 L1340.4 284.1 L1345.1 279.3 L1347.9 300.5 L1350.9 248.8 L1353.3 258.2 L1355.7 300.5 L1358.0 252.3 L1361.5 299.3 L1365.1 282.9 L1368.6 258.2 L1370.9 282.9 L1373.3 286.4 L1376.8 245.3 L1380.3 284.1 L1385.0 295.8 L1387.4 258.2 L1390.9 235.8 L1394.0 257.0 L1396.8 259.4 L1400.3 277.0 L1403.9 293.5 L1406.2 266.4 L1409.0 265.2 L1411.4 257.0 L1416.8 295.8 L1419.1 271.1 L1422.2 279.3 L1426.2 240.6 L1429.7 238.2 L1433.2 266.4 L1434.9 242.9 L1437.9 259.4 L1440.3 252.3 L1443.8 251.1 L1448.5 260.5 L1453.2 265.2 L1456.1 287.6 L1460.3 231.1 L1463.8 271.1 L1466.9 233.5 L1469.7 233.5 L1473.2 271.1 L1474.9 253.5 L1477.2 294.6 L1480.3 255.8 L1485.0 252.3 L1488.5 239.4 L1493.2 279.3 L1495.6 240.6 L1490.0 241.7 L1492.8 279.3 L1495.9 240.6 L1500.6 239.4 L1506.0 274.6 L1508.8 266.4 L1512.3 265.2 L1518.7 235.8 L1522.9 260.5 L1525.3 260.5 L1529.5 226.4 L1532.8 262.9 L1537.0 257.0 L1540.6 267.6 L1546.0 268.8 L1548.8 251.1 L1553.0 237.0 L1556.3 259.4 L1558.7 228.8 L1561.7 242.9 L1568.8 271.1 L1571.8 245.3 L1577.0 246.4 L1579.3 207.6 L1582.2 237.0 L1585.9 239.4 L1587.6 252.3 L1590.6 233.5 L1595.8 278.2 L1598.2 248.8 L1601.7 258.2 L1605.2 259.4 L1611.1 219.4 L1614.6 246.4 L1617.0 245.3 L1619.3 264.1 L1622.1 230.0 L1627.5 232.3 L1633.4 259.4 L1635.8 260.5 L1640.5 207.6 L1643.3 288.8 L1645.2 225.3 L1648.0 222.9 L1651.1 251.1 L1654.1 252.3 L1655.8 411.7 L1667.5 411.7 L1669.9 268.8 L1672.2 269.9 L1674.6 225.3 L1679.3 238.2 L1682.3 232.3 L1685.2 308.7 L1688.0 291.1 L1690.6 225.3 L1693.4 267.6 L1695.7 411.7 L1950.9 411.7" fill="none" stroke="#444674" stroke-width="3.2" stroke-linejoin="round" stroke-linecap="butt"/>
<path d="M1066.8 260.5 L1069.4 277.9 L1072.1 273.1 L1074.7 245.6 L1077.4 290.9 L1080.0 264.9 L1082.6 245.7 L1085.3 268.1 L1087.9 275.2 L1090.6 296.3 L1093.2 273.9 L1095.8 271.8 L1098.5 254.3 L1101.1 259.8 L1103.8 250.5 L1106.4 267.2 L1109.0 268.4 L1111.7 264.0 L1114.3 268.5 L1117.0 298.5 L1119.6 263.0 L1122.2 258.8 L1124.9 288.5 L1127.5 293.0 L1130.2 287.5 L1132.8 274.5 L1135.4 284.1 L1138.1 276.3 L1140.7 257.1 L1143.4 282.9 L1146.0 262.6 L1148.6 275.5 L1151.3 259.5 L1153.9 261.4 L1156.6 280.1 L1159.2 281.2 L1161.8 238.7 L1164.5 236.3 L1167.1 243.5 L1169.8 244.0 L1172.4 268.8 L1175.0 225.0 L1177.7 234.0 L1180.3 283.9 L1183.0 233.6 L1185.6 241.5 L1188.2 280.5 L1190.9 264.0 L1193.5 251.6 L1196.2 233.4 L1198.8 240.5 L1201.4 267.0 L1204.1 288.7 L1206.7 263.0 L1209.4 289.7 L1212.0 260.6 L1214.6 319.6 L1217.3 232.3 L1219.9 278.5 L1222.6 266.8 L1225.2 254.5 L1227.8 229.7 L1230.5 215.4 L1233.1 263.5 L1235.8 235.4 L1238.4 252.1 L1241.0 279.9 L1243.7 284.2 L1246.3 281.0 L1249.0 270.7 L1251.6 266.8 L1254.2 249.1 L1256.9 268.2 L1259.5 232.8 L1262.2 262.1 L1264.8 294.6 L1267.4 272.0 L1270.1 264.3 L1272.7 322.4 L1275.4 280.7 L1278.0 268.4 L1280.6 207.8 L1283.3 232.7 L1285.9 306.0 L1288.6 314.9 L1291.2 330.7 L1293.8 260.1 L1296.5 292.8 L1299.1 256.4 L1301.8 287.3 L1304.4 290.0 L1307.0 290.5 L1309.7 259.9 L1312.3 268.2 L1315.0 290.7 L1317.6 304.9 L1320.2 264.1 L1322.9 248.7 L1325.5 257.2 L1328.2 263.5 L1330.8 292.2 L1333.4 309.2 L1336.1 277.6 L1338.7 239.5 L1341.4 247.0 L1344.0 280.8 L1346.6 255.6 L1349.3 235.6 L1351.9 236.4 L1354.6 305.8 L1357.2 295.1 L1359.8 286.5 L1362.5 254.4 L1365.1 301.8 L1367.8 332.0 L1370.4 274.4 L1373.0 265.1 L1375.7 245.2 L1378.3 280.4 L1381.0 233.1 L1383.6 261.0 L1386.2 264.0 L1388.9 272.1 L1391.5 298.1 L1394.2 240.7 L1396.8 259.0 L1399.4 264.6 L1402.1 282.1 L1404.7 267.5 L1407.4 286.2 L1410.0 298.0 L1412.6 330.6 L1415.3 301.1 L1417.9 207.8 L1420.6 269.5 L1423.2 282.8 L1425.8 252.7 L1428.5 289.8 L1431.1 300.0 L1433.8 253.6 L1436.4 269.7 L1439.0 283.9 L1441.7 255.5 L1444.3 299.8 L1447.0 257.9 L1449.6 293.1 L1452.2 284.8 L1454.9 286.0 L1457.5 314.8 L1460.2 310.4 L1462.8 234.5 L1465.4 266.2 L1468.1 277.2 L1470.7 227.0 L1473.4 272.7 L1476.0 258.0 L1478.6 277.6 L1481.3 271.1 L1483.9 277.2 L1486.6 284.6 L1489.2 239.6 L1491.8 250.3 L1494.5 267.1 L1497.1 297.3 L1499.8 286.2 L1502.4 277.1 L1505.0 244.4 L1507.7 226.5 L1510.3 277.1 L1513.0 295.3 L1515.6 256.5 L1518.2 305.0 L1520.9 237.5 L1523.5 264.9 L1526.2 274.4 L1528.8 276.5 L1531.4 274.5 L1534.1 275.8 L1536.7 247.4 L1539.4 272.5 L1542.0 277.7 L1544.6 277.2 L1547.3 285.0 L1549.9 248.6 L1552.6 245.7 L1555.2 306.1 L1557.8 277.2 L1560.5 242.4 L1563.1 266.3 L1565.8 207.8 L1568.4 255.0 L1571.0 283.0 L1573.7 248.6 L1576.3 240.6 L1579.0 241.8 L1581.6 245.9 L1584.2 266.6 L1586.9 330.1 L1589.5 266.3 L1592.2 237.8 L1594.8 280.6 L1597.4 297.3 L1600.1 340.3 L1602.7 411.6 L1605.4 294.3 L1608.0 230.0 L1610.6 207.8 L1613.3 249.6 L1615.9 330.1 L1618.6 411.6 L1621.2 282.5 L1623.8 284.3 L1626.5 254.0 L1629.1 262.8 L1631.8 312.1 L1634.4 284.1 L1637.0 274.8 L1639.7 271.3 L1642.3 261.7 L1645.0 262.9 L1647.6 275.7 L1650.2 276.3 L1652.9 257.3 L1655.5 323.0 L1658.2 289.6 L1660.8 254.2 L1663.4 255.5 L1666.1 207.8 L1668.7 263.3 L1671.4 269.4 L1674.0 310.3 L1676.6 258.9 L1679.3 288.7 L1681.9 262.2 L1684.6 267.2 L1687.2 207.8 L1689.8 319.0 L1692.5 289.8 L1695.1 280.1 L1697.8 266.0 L1700.4 208.1 L1703.0 278.9 L1705.7 282.2 L1708.3 290.2 L1711.0 300.6 L1713.6 290.5 L1716.2 273.2 L1718.9 238.4 L1721.5 247.7 L1724.2 275.9 L1726.8 207.8 L1729.4 257.2 L1732.1 279.3 L1734.7 265.9 L1737.4 257.4 L1740.0 291.0 L1742.6 265.5 L1745.3 281.6 L1747.9 239.3 L1750.6 244.7 L1753.2 243.8 L1755.8 207.8 L1758.5 246.4 L1761.1 257.4 L1763.8 255.8 L1766.4 262.6 L1769.0 278.1 L1771.7 246.5 L1774.3 230.1 L1777.0 223.7 L1779.6 249.7 L1782.2 260.4 L1784.9 260.7 L1787.5 242.0 L1790.2 274.0 L1792.8 224.9 L1795.4 241.4 L1798.1 243.4 L1800.7 219.3 L1803.4 212.8 L1806.0 248.6 L1808.6 255.9 L1811.3 232.6 L1813.9 236.4 L1816.6 251.3 L1819.2 207.8 L1821.8 280.6 L1824.5 267.2 L1827.1 264.4 L1829.8 274.3 L1832.4 252.8 L1835.0 255.4 L1837.7 207.8 L1840.3 245.5 L1843.0 262.8 L1845.6 283.5 L1848.2 263.4 L1850.9 273.1 L1853.5 228.4 L1856.2 276.8 L1858.8 246.8 L1861.4 278.1 L1864.1 278.3 L1866.7 275.6 L1869.4 207.8 L1872.0 260.1 L1874.6 253.6 L1877.3 230.3 L1879.9 253.9 L1882.6 256.0 L1885.2 237.0 L1887.8 258.5 L1890.5 207.8 L1893.1 228.7 L1895.8 288.9 L1898.4 259.1 L1901.0 284.5 L1903.7 278.3 L1906.3 253.1 L1909.0 273.5 L1911.6 315.1 L1914.2 246.9 L1916.9 302.1 L1919.5 258.7 L1922.2 229.0 L1924.8 241.8 L1927.4 260.2 L1930.1 273.0 L1932.7 268.3 L1935.4 225.9 L1938.0 236.0 L1940.6 282.4 L1943.3 250.1 L1945.9 224.5 L1948.6 236.6 L1951.2 276.7" fill="none" stroke="#DAD5E1" stroke-width="2.9" stroke-dasharray="2.9 3.1" stroke-linejoin="round"/>
<path d="M64.5 698.6 L66.2 697.6 L67.8 696.5 L69.5 698.4 L71.2 699.0 L72.8 697.0 L74.5 697.7 L76.2 698.8 L77.9 697.6 L79.5 697.1 L81.2 696.3 L82.9 696.5 L84.5 697.0 L86.2 700.3 L87.9 696.6 L89.5 700.3 L91.2 697.5 L92.9 699.2 L94.5 697.6 L96.2 698.1 L97.9 697.6 L99.5 697.0 L101.2 673.2 L102.9 668.6 L104.6 672.3 L106.2 683.2 L107.9 673.6 L109.6 667.9 L111.2 672.0 L112.9 675.8 L114.6 669.4 L116.2 658.0 L117.9 671.1 L119.6 681.0 L121.2 688.5 L122.9 677.5 L124.6 681.8 L126.3 669.9 L127.9 675.0 L129.6 671.0 L131.3 675.0 L132.9 670.1 L134.6 676.9 L136.3 681.5 L137.9 670.0 L139.6 671.7 L141.3 675.7 L142.9 674.8 L144.6 675.0 L146.3 674.4 L147.9 675.8 L149.6 673.0 L151.3 672.4 L153.0 677.6 L154.6 676.1 L156.3 679.3 L158.0 671.0 L159.6 678.3 L161.3 674.1 L163.0 675.4 L164.6 675.8 L166.3 682.3 L168.0 677.5 L169.6 673.9 L171.3 675.4 L173.0 660.0 L174.7 681.8 L176.3 672.0 L178.0 677.7 L179.7 661.8 L181.3 678.4 L183.0 671.3 L184.7 676.4 L186.3 669.9 L188.0 677.6 L189.7 676.9 L191.3 676.7 L193.0 673.7 L194.7 668.3 L196.3 668.0 L198.0 679.0 L199.7 669.5 L201.4 675.5 L203.0 684.1 L204.7 681.5 L206.4 667.8 L208.0 675.3 L209.7 676.6 L211.4 664.5 L213.0 676.6 L214.7 671.4 L216.4 674.9 L218.0 671.6 L219.7 674.4 L221.4 657.0 L223.1 679.3 L224.7 676.0 L226.4 681.4 L228.1 665.5 L229.7 672.6 L231.4 677.3 L233.1 668.8 L234.7 681.7 L236.4 674.3 L238.1 675.8 L239.7 674.1 L241.4 663.4 L243.1 673.4 L244.7 679.5 L246.4 668.8 L248.1 668.8 L249.8 676.3 L251.4 676.4 L253.1 671.5 L254.8 671.4 L256.4 668.9 L258.1 666.8 L259.8 670.0 L261.4 671.3 L263.1 676.4 L264.8 674.0 L266.4 661.5 L268.1 669.0 L269.8 672.3 L271.5 676.6 L273.1 663.3 L274.8 676.0 L276.5 674.6 L278.1 677.9 L279.8 662.6 L281.5 669.7 L283.1 663.0 L284.8 679.9 L286.5 659.8 L288.1 673.0 L289.8 684.2 L291.5 670.5 L293.1 663.3 L294.8 677.1 L296.5 671.4 L298.2 682.6 L299.8 679.0 L301.5 670.7 L303.2 662.3 L304.8 675.1 L306.5 673.9 L308.2 673.7 L309.8 678.9 L311.5 674.7 L313.2 672.0 L314.8 674.2 L316.5 672.8 L318.2 668.5 L319.9 685.0 L321.5 662.2 L323.2 674.9 L324.9 671.7 L326.5 677.5 L328.2 683.1 L329.9 668.0 L331.5 681.2 L333.2 674.4 L334.9 673.9 L336.5 667.2 L338.2 675.6 L339.9 661.4 L341.5 672.0 L343.2 670.7 L344.9 669.7 L346.6 668.9 L348.2 679.4 L349.9 670.7 L351.6 680.1 L353.2 681.3 L354.9 676.8 L356.6 676.8 L358.2 668.6 L359.9 669.6 L361.6 675.8 L363.2 673.3 L364.9 670.4 L366.6 667.7 L368.2 669.8 L369.9 679.2 L371.6 674.5 L373.3 685.9 L374.9 670.4 L376.6 677.8 L378.3 674.9 L379.9 672.2 L381.6 673.0 L383.3 659.8 L384.9 671.0 L386.6 680.4 L388.3 698.8 L389.9 679.7 L391.6 669.2 L393.3 673.2 L395.0 674.0 L396.6 672.7 L398.3 654.8 L400.0 672.3 L401.6 676.1 L403.3 678.5 L405.0 670.4 L406.6 664.0 L408.3 672.5 L410.0 680.1 L411.6 675.1 L413.3 665.4 L415.0 670.6 L416.6 678.2 L418.3 673.5 L420.0 675.7 L421.7 673.2 L423.3 673.2 L425.0 675.1 L426.7 693.7 L428.3 660.8 L430.0 675.5 L431.7 673.1 L433.3 674.6 L435.0 671.5 L436.7 711.4 L438.3 711.4 L440.0 711.4 L441.7 711.4 L443.4 711.4 L445.0 691.8 L446.7 694.0 L448.4 691.4 L450.0 691.4 L451.7 693.2 L453.4 692.5 L455.0 692.6 L456.7 692.1 L458.4 693.8 L460.0 681.0 L461.7 681.0 L463.4 681.0 L465.0 655.6 L466.7 645.6 L468.4 650.9 L470.1 663.3 L471.7 646.6 L473.4 645.8 L475.1 678.6 L476.7 688.2 L478.4 683.2 L480.1 688.8 L481.7 681.0 L483.4 688.9 L485.1 681.4 L486.7 689.6 L488.4 678.0 L490.1 690.5 L491.8 683.6 L493.4 689.0 L495.1 681.9 L496.8 690.2 L498.4 680.2 L500.1 690.1 L501.8 686.3 L503.4 686.1 L505.1 681.2 L506.8 689.6 L508.4 681.0 L510.1 689.6 L511.8 680.4 L513.4 689.9 L515.1 675.8 L516.8 690.5 L518.5 682.6 L520.1 690.6 L521.8 680.4 L523.5 685.2 L525.1 683.4 L526.8 690.1 L528.5 683.4 L530.1 688.3 L531.8 682.5 L533.5 688.8 L535.1 680.9 L536.8 689.4 L538.5 681.9 L540.2 688.0 L541.8 678.9 L543.5 689.6 L545.2 682.2 L546.8 689.1 L548.5 676.4 L550.2 687.4 L551.8 680.9 L553.5 688.8 L555.2 677.1 L556.8 688.0 L558.5 683.8 L560.2 689.9 L561.8 679.0 L563.5 688.7 L565.2 677.6 L566.9 688.3 L568.5 682.7 L570.2 687.4 L571.9 682.2 L573.5 685.1 L575.2 679.2 L576.9 688.3 L578.5 675.8 L580.2 617.3 L581.9 623.6 L583.5 639.4 L585.2 625.2 L586.9 640.7 L588.6 642.3 L590.2 628.3 L591.9 650.1 L593.6 624.6 L595.2 625.2 L596.9 635.1 L598.6 630.2 L600.2 644.3 L601.9 634.2 L603.6 647.8 L605.2 630.7 L606.9 648.7 L608.6 646.9 L610.2 649.1 L611.9 627.0 L613.6 647.0 L615.3 635.0 L616.9 644.4 L618.6 630.9 L620.3 648.2 L621.9 634.6 L623.6 633.3 L623.6 711.4 L64.5 711.4 Z" fill="#7B528C"/>
<path d="M64.5 700.6 L66.2 703.5 L67.8 703.4 L69.5 697.2 L71.2 699.0 L72.8 698.5 L74.5 697.4 L76.2 698.6 L77.9 697.6 L79.5 692.2 L81.2 699.2 L82.9 699.1 L84.5 698.6 L86.2 697.7 L87.9 696.0 L89.5 698.3 L91.2 691.5 L92.9 698.7 L94.5 692.0 L96.2 703.9 L97.9 699.1 L99.5 696.6 L101.2 697.0 L102.9 697.7 L104.6 700.4 L106.2 698.6 L107.9 698.1 L109.6 697.9 L111.2 693.7 L112.9 695.8 L114.6 695.1 L116.2 696.3 L117.9 698.9 L119.6 695.7 L121.2 705.7 L122.9 698.3 L124.6 700.2 L126.3 697.1 L127.9 703.9 L129.6 696.1 L131.3 695.1 L132.9 698.2 L134.6 697.5 L136.3 692.5 L137.9 697.7 L139.6 699.5 L141.3 701.3 L142.9 699.7 L144.6 699.7 L146.3 697.9 L147.9 700.2 L149.6 700.0 L151.3 699.8 L153.0 704.1 L154.6 698.0 L156.3 697.2 L158.0 693.9 L159.6 696.0 L161.3 698.3 L163.0 699.2 L164.6 697.0 L166.3 696.3 L168.0 695.4 L169.6 697.8 L171.3 697.1 L173.0 697.0 L174.7 700.8 L176.3 701.1 L178.0 699.6 L179.7 699.2 L181.3 699.1 L183.0 699.3 L184.7 691.2 L186.3 699.5 L188.0 697.7 L189.7 697.6 L191.3 699.6 L193.0 698.1 L194.7 699.5 L196.3 691.5 L198.0 697.2 L199.7 694.8 L201.4 695.9 L203.0 694.5 L204.7 696.2 L206.4 697.3 L208.0 701.2 L209.7 696.1 L211.4 693.2 L213.0 696.9 L214.7 695.5 L216.4 696.5 L218.0 697.0 L219.7 698.2 L221.4 697.8 L223.1 702.7 L224.7 692.3 L226.4 697.0 L228.1 697.1 L229.7 698.7 L231.4 699.5 L233.1 696.4 L234.7 697.9 L236.4 694.5 L238.1 697.9 L239.7 699.3 L241.4 695.8 L243.1 692.6 L244.7 698.3 L246.4 698.9 L248.1 698.4 L249.8 699.4 L251.4 699.3 L253.1 700.9 L254.8 700.2 L256.4 700.3 L258.1 696.4 L259.8 697.7 L261.4 696.5 L263.1 696.0 L264.8 695.7 L266.4 694.8 L268.1 699.2 L269.8 698.2 L271.5 701.4 L273.1 697.5 L274.8 696.1 L276.5 701.7 L278.1 703.0 L279.8 697.8 L281.5 696.8 L283.1 696.8 L284.8 698.1 L286.5 697.0 L288.1 697.5 L289.8 697.9 L291.5 695.8 L293.1 699.1 L294.8 698.8 L296.5 698.9 L298.2 696.5 L299.8 699.7 L301.5 696.4 L303.2 696.3 L304.8 696.9 L306.5 701.0 L308.2 701.0 L309.8 703.0 L311.5 693.1 L313.2 697.1 L314.8 696.8 L316.5 697.6 L318.2 702.5 L319.9 696.7 L321.5 701.3 L323.2 700.4 L324.9 696.2 L326.5 696.6 L328.2 699.1 L329.9 700.2 L331.5 697.1 L333.2 696.1 L334.9 699.6 L336.5 698.3 L338.2 696.9 L339.9 697.4 L341.5 693.4 L343.2 700.4 L344.9 697.5 L346.6 696.3 L348.2 697.1 L349.9 703.0 L351.6 698.8 L353.2 700.5 L354.9 695.1 L356.6 692.3 L358.2 695.9 L359.9 700.1 L361.6 698.8 L363.2 690.9 L364.9 697.7 L366.6 701.0 L368.2 695.3 L369.9 694.0 L371.6 694.2 L373.3 700.9 L374.9 702.3 L376.6 696.3 L378.3 694.4 L379.9 697.5 L381.6 699.7 L383.3 700.8 L384.9 702.6 L386.6 702.7 L388.3 704.4 L389.9 707.8 L391.6 706.2 L393.3 707.0 L395.0 708.4 L396.6 709.6 L398.3 708.9 L400.0 710.9 L401.6 708.5 L403.3 709.5 L405.0 707.3 L406.6 707.6 L408.3 704.9 L410.0 705.4 L411.6 705.6 L413.3 704.4 L415.0 703.8 L416.6 700.6 L418.3 698.4 L420.0 698.1 L421.7 700.3 L423.3 695.1 L425.0 694.1 L426.7 697.5 L428.3 698.8 L430.0 698.5 L431.7 698.0 L433.3 693.5 L435.0 695.2 L436.7 696.7 L438.3 697.1 L440.0 699.3 L441.7 699.7 L443.4 699.7 L445.0 703.5 L446.7 697.6 L448.4 698.0 L450.0 697.9 L451.7 701.7 L453.4 693.4 L455.0 700.4 L456.7 701.2 L458.4 694.9 L460.0 696.7 L461.7 695.3 L463.4 697.1 L465.0 695.6 L466.7 697.5 L468.4 695.6 L470.1 698.8 L471.7 692.0 L473.4 700.1 L475.1 696.3 L476.7 696.4 L478.4 700.8 L480.1 698.7 L481.7 699.3 L483.4 695.4 L485.1 698.4 L486.7 697.3 L488.4 696.6 L490.1 695.7 L491.8 701.8 L493.4 700.9 L495.1 695.4 L496.8 692.6 L498.4 695.7 L500.1 697.1 L501.8 701.0 L503.4 696.5 L505.1 697.6 L506.8 698.4 L508.4 701.2 L510.1 691.7 L511.8 697.1 L513.4 697.2 L515.1 696.8 L516.8 698.7 L518.5 701.6 L520.1 699.7 L521.8 697.6 L523.5 698.3 L525.1 697.4 L526.8 691.6 L528.5 696.7 L530.1 696.5 L531.8 700.3 L533.5 695.5 L535.1 700.3 L536.8 698.5 L538.5 694.8 L540.2 699.6 L541.8 700.0 L543.5 699.5 L545.2 696.5 L546.8 699.0 L548.5 700.4 L550.2 694.8 L551.8 696.7 L553.5 700.5 L555.2 695.7 L556.8 700.8 L558.5 695.2 L560.2 697.2 L561.8 700.3 L563.5 696.9 L565.2 692.2 L566.9 699.6 L568.5 696.1 L570.2 697.2 L571.9 696.6 L573.5 700.2 L575.2 697.5 L576.9 695.7 L578.5 694.0 L580.2 698.2 L581.9 694.6 L583.5 697.0 L585.2 694.8 L586.9 701.5 L588.6 702.0 L590.2 699.1 L591.9 698.0 L593.6 700.4 L595.2 697.2 L596.9 699.8 L598.6 697.7 L600.2 701.9 L601.9 697.0 L603.6 696.6 L605.2 694.0 L606.9 696.4 L608.6 697.8 L610.2 701.1 L611.9 696.6 L613.6 698.1 L615.3 698.9 L616.9 698.3 L618.6 697.1 L620.3 697.5 L621.9 700.0 L623.6 702.9" fill="none" stroke="#E4DFEA" stroke-width="2.8" stroke-dasharray="2.8 2.4" stroke-linejoin="round"/>
<path d="M799.0 637.0 L800.5 635.4 L801.9 635.0 L803.4 635.9 L804.8 636.1 L806.3 635.0 L807.7 639.3 L809.2 635.4 L810.6 634.6 L812.1 636.0 L813.5 635.9 L815.0 635.4 L816.4 635.4 L817.9 636.2 L819.4 635.2 L820.8 634.4 L822.3 635.9 L823.7 636.3 L825.2 639.6 L826.6 637.9 L828.1 636.9 L829.5 635.5 L831.0 636.8 L832.4 630.4 L833.9 637.2 L835.3 636.5 L836.8 637.2 L838.3 635.0 L839.7 637.8 L841.2 630.7 L842.6 637.1 L844.1 637.7 L845.5 636.9 L847.0 633.6 L848.4 639.0 L849.9 636.6 L851.3 634.9 L852.8 635.5 L854.2 635.0 L855.7 632.4 L857.1 632.1 L858.6 636.0 L860.1 638.3 L861.5 637.2 L863.0 636.2 L864.4 636.9 L865.9 637.5 L867.3 636.0 L868.8 636.3 L870.2 636.4 L871.7 635.8 L873.1 634.8 L874.6 638.9 L876.0 636.1 L877.5 636.7 L879.0 635.4 L880.4 637.4 L881.9 638.4 L883.3 637.2 L884.8 638.9 L886.2 635.0 L887.7 636.3 L889.1 637.5 L890.6 635.1 L892.0 636.1 L893.5 635.8 L894.9 635.8 L896.4 634.8 L897.9 641.1 L899.3 636.9 L900.8 637.0 L902.2 637.2 L903.7 633.2 L905.1 637.4 L906.6 638.9 L908.0 637.4 L909.5 639.3 L910.9 637.1 L912.4 636.0 L913.8 636.1 L915.3 635.9 L916.8 634.2 L918.2 633.6 L919.7 637.8 L921.1 638.8 L922.6 638.2 L924.0 639.4 L925.5 638.2 L926.9 637.7 L928.4 636.3 L929.8 635.8 L931.3 639.3 L932.7 635.3 L934.2 635.8 L935.7 640.4 L937.1 636.3 L938.6 637.5 L940.0 637.0 L941.5 636.3 L942.9 634.7 L944.4 638.2 L945.8 638.1 L947.3 638.0 L948.7 638.0 L950.2 632.6 L951.6 635.4 L953.1 638.8 L954.5 637.3 L956.0 637.7 L957.5 637.2 L958.9 638.9 L960.4 636.8 L961.8 636.4 L963.3 636.2 L964.7 637.8 L966.2 633.4 L967.6 637.7 L969.1 638.6 L970.5 635.1 L972.0 636.5 L973.4 635.0 L974.9 636.4 L976.4 639.5 L977.8 636.9 L979.3 638.1 L980.7 637.3 L982.2 635.5 L983.6 639.3 L985.1 635.8 L986.5 638.1 L988.0 635.5 L989.4 636.2 L990.9 638.2 L992.3 635.8 L993.8 633.6 L995.3 637.2 L996.7 637.3 L998.2 635.2 L999.6 633.8 L1001.1 636.1 L1002.5 636.1 L1004.0 638.7 L1005.4 632.0 L1006.9 633.3 L1008.3 637.5 L1009.8 637.2 L1011.2 635.2 L1012.7 640.2 L1014.2 638.9 L1015.6 636.5 L1017.1 637.7 L1018.5 636.5 L1020.0 634.4 L1021.4 637.5 L1022.9 637.5 L1024.3 640.3 L1025.8 638.7 L1027.2 637.2 L1028.7 639.9 L1030.1 632.5 L1031.6 633.8 L1033.1 637.7 L1034.5 637.7 L1036.0 635.4 L1037.4 637.2 L1038.9 635.8 L1040.3 637.7 L1041.8 637.5 L1043.2 636.3 L1044.7 637.8 L1046.1 638.9 L1047.6 634.9 L1049.0 637.4 L1050.5 637.1 L1051.9 636.7 L1053.4 636.6 L1054.9 637.2 L1056.3 633.1 L1057.8 638.2 L1059.2 638.2 L1060.7 633.8 L1062.1 639.6 L1063.6 637.3 L1065.0 636.3 L1066.5 635.9 L1067.9 639.0 L1069.4 635.0 L1070.8 631.1 L1072.3 635.2 L1073.8 636.2 L1075.2 635.6 L1076.7 633.7 L1078.1 636.0 L1079.6 637.1 L1081.0 637.9 L1082.5 636.1 L1083.9 636.2 L1085.4 633.0 L1086.8 634.5 L1088.3 635.2 L1089.7 635.4 L1091.2 635.1 L1092.7 635.1 L1094.1 637.2 L1095.6 638.9 L1097.0 636.5 L1098.5 635.2 L1099.9 635.6 L1101.4 634.7 L1102.8 633.6 L1104.3 632.3 L1105.7 636.0 L1107.2 637.1 L1108.6 636.0 L1110.1 635.6 L1111.6 637.6 L1113.0 632.6 L1114.5 635.5 L1115.9 634.2 L1117.4 635.6 L1118.8 635.2 L1120.3 633.5 L1121.7 635.5 L1123.2 634.3 L1124.6 637.0 L1126.1 634.5 L1127.5 630.8 L1129.0 634.5 L1130.5 637.1 L1131.9 635.6 L1133.4 632.9 L1134.8 635.1 L1136.3 633.4 L1137.7 636.8 L1139.2 635.7 L1140.6 633.6 L1142.1 636.7 L1143.5 637.1 L1145.0 633.5 L1146.4 634.8 L1147.9 637.6 L1149.3 637.0 L1150.8 635.0 L1152.3 634.8 L1153.7 638.6 L1155.2 634.7 L1156.6 636.6 L1158.1 631.5 L1159.5 635.7 L1161.0 633.5 L1162.4 633.5 L1163.9 634.1 L1165.3 634.7 L1166.8 635.0 L1168.2 636.0 L1169.7 633.6 L1171.2 633.4 L1172.6 633.3 L1174.1 634.0 L1175.5 636.4 L1177.0 637.9 L1178.4 635.4 L1179.9 633.9 L1181.3 636.8 L1182.8 637.5 L1184.2 633.6 L1185.7 632.0 L1187.1 634.0 L1188.6 635.7 L1190.1 636.5 L1191.5 636.7 L1193.0 632.4 L1194.4 635.5 L1195.9 636.4 L1197.3 635.8 L1198.8 631.8 L1200.2 630.5 L1201.7 632.9 L1203.1 636.0 L1204.6 633.4 L1206.0 632.0 L1207.5 632.9 L1209.0 635.5 L1210.4 633.2 L1211.9 634.6 L1213.3 634.0 L1214.8 631.5 L1216.2 635.3 L1217.7 631.8 L1219.1 636.5 L1220.6 634.1 L1222.0 636.6 L1223.5 633.0 L1224.9 633.3 L1226.4 632.2 L1227.9 636.4 L1229.3 635.2 L1230.8 634.0 L1232.2 633.0 L1233.7 634.4 L1235.1 633.8 L1236.6 635.0 L1238.0 631.2 L1239.5 631.6 L1240.9 634.3 L1242.4 635.1 L1243.8 629.9 L1245.3 634.0 L1246.7 632.4 L1248.2 630.7 L1249.7 628.1 L1251.1 634.4 L1252.6 635.2 L1254.0 635.8 L1255.5 629.9 L1256.9 631.2 L1258.4 635.5 L1259.8 632.8 L1261.3 629.8 L1262.7 632.1 L1264.2 630.9 L1265.6 631.1 L1267.1 635.3 L1268.6 634.1 L1270.0 635.1 L1271.5 633.1 L1272.9 634.3 L1274.4 630.2 L1275.8 634.6 L1277.3 631.2 L1278.7 632.3 L1280.2 628.7 L1281.6 631.4 L1283.1 635.1 L1284.5 630.6 L1286.0 632.7 L1286 711.4 L799 711.4 Z" fill="#F58C46"/>
<rect x="827.9" y="625" width="2.3" height="87" fill="#fff"/><rect x="1124.2" y="625" width="6.9" height="87" fill="#fff"/>
<path d="M799.0 635.3 L800.5 636.1 L801.9 636.4 L803.4 636.3 L804.8 638.3 L806.3 634.6 L807.7 636.2 L809.2 638.2 L810.6 635.0 L812.1 638.4 L813.5 634.6 L815.0 637.5 L816.4 636.7 L817.9 636.2 L819.4 636.8 L820.8 634.2 L822.3 636.0 L823.7 636.4 L825.2 636.2 L826.6 634.5 L828.1 637.0 L829.5 636.6 L831.0 637.2 L832.4 636.7 L833.9 641.7 L835.3 636.9 L836.8 639.2 L838.3 635.5 L839.7 637.8 L841.2 636.9 L842.6 634.6 L844.1 636.0 L845.5 637.5 L847.0 636.1 L848.4 636.7 L849.9 639.1 L851.3 637.3 L852.8 638.5 L854.2 633.1 L855.7 635.0 L857.1 639.1 L858.6 636.9 L860.1 635.0 L861.5 636.0 L863.0 636.3 L864.4 637.8 L865.9 640.7 L867.3 638.0 L868.8 641.7 L870.2 636.8 L871.7 634.4 L873.1 638.8 L874.6 636.5 L876.0 635.0 L877.5 638.5 L879.0 639.1 L880.4 638.5 L881.9 637.9 L883.3 638.4 L884.8 636.7 L886.2 636.5 L887.7 638.6 L889.1 640.6 L890.6 636.9 L892.0 639.6 L893.5 638.5 L894.9 637.1 L896.4 634.3 L897.9 640.9 L899.3 638.6 L900.8 633.8 L902.2 636.6 L903.7 640.0 L905.1 640.1 L906.6 635.3 L908.0 634.9 L909.5 635.6 L910.9 638.4 L912.4 640.1 L913.8 637.0 L915.3 643.4 L916.8 640.6 L918.2 640.4 L919.7 636.1 L921.1 637.5 L922.6 636.7 L924.0 636.9 L925.5 637.1 L926.9 636.4 L928.4 634.3 L929.8 635.2 L931.3 636.6 L932.7 640.0 L934.2 638.1 L935.7 636.8 L937.1 639.9 L938.6 639.3 L940.0 637.4 L941.5 637.2 L942.9 635.2 L944.4 639.4 L945.8 637.6 L947.3 636.2 L948.7 636.6 L950.2 639.7 L951.6 637.2 L953.1 641.9 L954.5 636.3 L956.0 639.0 L957.5 639.6 L958.9 639.0 L960.4 640.8 L961.8 636.4 L963.3 638.4 L964.7 639.7 L966.2 637.5 L967.6 637.5 L969.1 636.0 L970.5 638.1 L972.0 637.7 L973.4 639.9 L974.9 635.0 L976.4 638.3 L977.8 636.8 L979.3 638.2 L980.7 636.3 L982.2 637.0 L983.6 635.8 L985.1 635.2 L986.5 639.8 L988.0 640.7 L989.4 635.7 L990.9 636.3 L992.3 633.5 L993.8 634.2 L995.3 634.4 L996.7 637.1 L998.2 636.5 L999.6 638.6 L1001.1 636.1 L1002.5 634.6 L1004.0 635.1 L1005.4 638.9 L1006.9 636.7 L1008.3 639.4 L1009.8 638.3 L1011.2 642.5 L1012.7 637.6 L1014.2 641.4 L1015.6 637.9 L1017.1 635.1 L1018.5 640.0 L1020.0 634.6 L1021.4 638.8 L1022.9 637.1 L1024.3 634.3 L1025.8 640.5 L1027.2 637.0 L1028.7 633.8 L1030.1 638.8 L1031.6 636.8 L1033.1 637.8 L1034.5 635.9 L1036.0 632.8 L1037.4 638.1 L1038.9 638.0 L1040.3 639.1 L1041.8 638.5 L1043.2 639.4 L1044.7 638.8 L1046.1 634.8 L1047.6 635.7 L1049.0 637.1 L1050.5 639.4 L1051.9 636.9 L1053.4 637.6 L1054.9 640.3 L1056.3 636.5 L1057.8 635.7 L1059.2 633.9 L1060.7 637.0 L1062.1 635.9 L1063.6 641.2 L1065.0 632.6 L1066.5 637.3 L1067.9 635.2 L1069.4 636.0 L1070.8 638.4 L1072.3 637.8 L1073.8 635.6 L1075.2 635.5 L1076.7 634.2 L1078.1 634.1 L1079.6 642.0 L1081.0 636.1 L1082.5 637.9 L1083.9 637.8 L1085.4 637.5 L1086.8 634.2 L1088.3 638.1 L1089.7 637.2 L1091.2 638.0 L1092.7 635.5 L1094.1 635.5 L1095.6 634.4 L1097.0 637.1 L1098.5 645.3 L1099.9 641.9 L1101.4 634.7 L1102.8 677.7 L1104.3 710.1 L1105.7 670.9 L1107.2 635.5 L1108.6 640.6 L1110.1 633.7 L1111.6 637.1 L1113.0 635.7 L1114.5 638.5 L1115.9 636.4 L1117.4 635.4 L1118.8 635.6 L1120.3 635.6 L1121.7 636.4 L1123.2 632.0 L1124.6 636.4 L1126.1 631.1 L1127.5 634.8 L1129.0 633.0 L1130.5 632.6 L1131.9 632.0 L1133.4 634.8 L1134.8 639.1 L1136.3 636.9 L1137.7 636.8 L1139.2 634.9 L1140.6 632.8 L1142.1 636.0 L1143.5 634.8 L1145.0 635.7 L1146.4 633.3 L1147.9 633.9 L1149.3 637.9 L1150.8 636.3 L1152.3 636.5 L1153.7 632.8 L1155.2 632.4 L1156.6 635.7 L1158.1 635.2 L1159.5 636.0 L1161.0 635.7 L1162.4 637.8 L1163.9 632.2 L1165.3 635.3 L1166.8 633.7 L1168.2 634.6 L1169.7 634.7 L1171.2 634.2 L1172.6 635.2 L1174.1 632.1 L1175.5 633.2 L1177.0 639.3 L1178.4 630.8 L1179.9 633.9 L1181.3 633.4 L1182.8 635.0 L1184.2 636.0 L1185.7 635.6 L1187.1 634.2 L1188.6 633.1 L1190.1 633.6 L1191.5 636.8 L1193.0 633.9 L1194.4 634.0 L1195.9 637.3 L1197.3 637.8 L1198.8 637.9 L1200.2 634.3 L1201.7 635.7 L1203.1 637.8 L1204.6 635.6 L1206.0 633.7 L1207.5 638.2 L1209.0 633.6 L1210.4 634.9 L1211.9 635.0 L1213.3 633.5 L1214.8 634.0 L1216.2 636.5 L1217.7 632.0 L1219.1 635.0 L1220.6 635.6 L1222.0 634.7 L1223.5 635.5 L1224.9 634.8 L1226.4 633.5 L1227.9 636.7 L1229.3 635.4 L1230.8 632.0 L1232.2 634.2 L1233.7 633.6 L1235.1 634.3 L1236.6 631.1 L1238.0 638.9 L1239.5 636.4 L1240.9 638.0 L1242.4 636.8 L1243.8 638.2 L1245.3 634.3 L1246.7 634.9 L1248.2 635.8 L1249.7 629.1 L1251.1 632.9 L1252.6 635.3 L1254.0 634.2 L1255.5 635.6 L1256.9 631.6 L1258.4 632.5 L1259.8 629.3 L1261.3 636.3 L1262.7 634.3 L1264.2 629.2 L1265.6 632.4 L1267.1 632.5 L1268.6 635.9 L1270.0 636.6 L1271.5 637.4 L1272.9 633.2 L1274.4 635.8 L1275.8 636.1 L1277.3 635.8 L1278.7 632.0 L1280.2 633.2 L1281.6 630.1 L1283.1 634.8 L1284.5 632.2 L1286.0 634.2" fill="none" stroke="#E6E2EC" stroke-width="3" stroke-dasharray="3 2.4" stroke-linejoin="round"/>
<path d="M1462.7 711.4 H1951.3" fill="none" stroke="#F2555A" stroke-opacity="0.45" stroke-width="1.2"/>
<path d="M1770.6 711.6 L1772.3 641.9 L1772.9 641.9 L1774.4 711.6 Z" fill="#F2555A" fill-opacity="0.92"/>
<path d="M1462.7 711.4 H1951.3" fill="none" stroke="#DAD5E1" stroke-width="2.6" stroke-dasharray="2.8 3.55"/>
<path d="M1897.3 613 V711" fill="none" stroke="#DAD5E1" stroke-width="3" stroke-dasharray="2.8 3.55"/>
</svg>
</body></html>
